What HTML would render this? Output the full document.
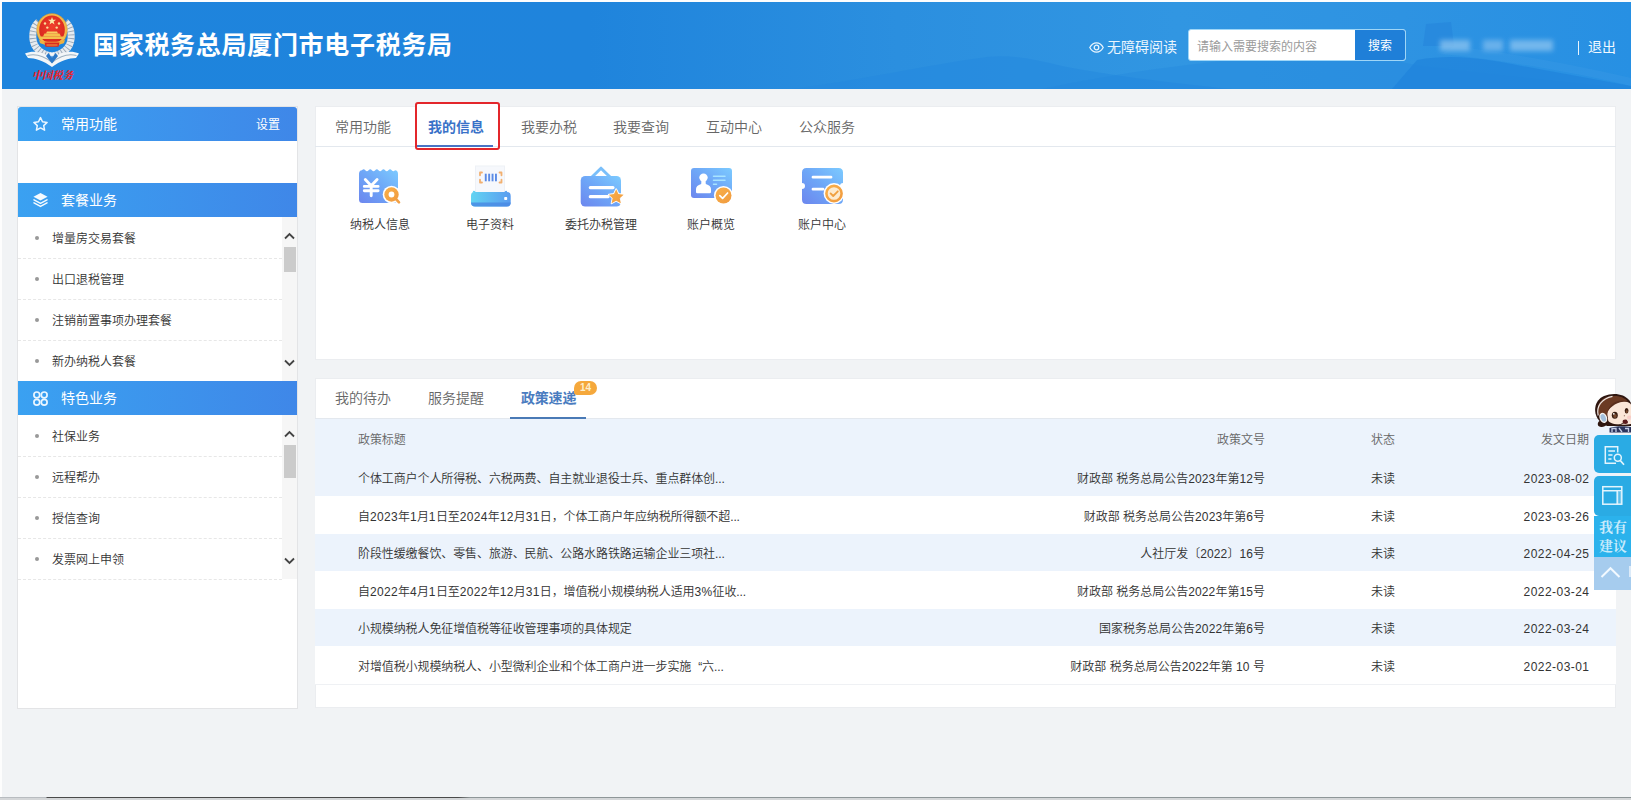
<!DOCTYPE html>
<html lang="zh-CN">
<head>
<meta charset="utf-8">
<title>国家税务总局厦门市电子税务局</title>
<style>
*{box-sizing:border-box;margin:0;padding:0}
html,body{width:1631px;height:800px;overflow:hidden}
body{background:#fdfdfd;font-family:"Liberation Sans","Noto Sans CJK SC",sans-serif;color:#333;position:relative;font-weight:350}
.abs{position:absolute}
#page{position:absolute;left:2px;top:2px;width:1629px;height:796px;background:#f1f3f5;overflow:hidden}
#hdr{font-weight:400;position:absolute;left:0;top:0;width:1629px;height:87px;background:linear-gradient(90deg,#1e84dc 0%,#1f84dc 40%,#2f92e0 75%,#2286dc 100%);overflow:hidden}
#hdr .title{position:absolute;left:91px;top:25px;font-size:25px;font-weight:700;color:#fff;letter-spacing:0.7px;line-height:36px;white-space:nowrap}
/* sidebar */
#side{position:absolute;left:16px;top:105px;width:279px;height:601px;background:#fff;box-shadow:0 0 0 1px #e3e4e6}
.shead{font-weight:400;position:absolute;left:0;width:279px;height:34px;background:linear-gradient(90deg,#3aa1f1,#3f87e8);color:#fff;font-size:14px;line-height:34px}
.shead span.t{position:absolute;left:43px;top:0}
.shead span.set{position:absolute;right:17px;top:1px;font-size:12px}
.sitem{position:absolute;left:0;width:264px;height:41px;border-bottom:1px dashed #e7e7e7;font-size:12px;line-height:40px;color:#333}
.sitem i{position:absolute;left:17px;top:18px;width:4px;height:4px;border-radius:50%;background:#999}
.sitem span{position:absolute;left:34px;top:1px;white-space:nowrap}
.sbar{position:absolute;left:264px;width:15px;background:#f6f6f6}
.sbar .th{position:absolute;left:2px;width:12px;background:#cbcbcb}
/* panels */
.panel{position:absolute;left:313px;width:1301px;background:#fff;outline:1px solid #ebedf0;outline-offset:-1px}
.tabs{position:absolute;left:0;top:0;width:100%;height:40px;border-bottom:1px solid #e3e8ee}
.tab{position:absolute;top:0;font-size:14px;line-height:40px;color:#666;white-space:nowrap}
.tab.on{color:#3a72c8;font-weight:700}
.ico{position:absolute;top:56px;width:48px;height:48px}
.ilab{position:absolute;top:109px;width:120px;text-align:center;font-size:12px;line-height:18px;color:#333;white-space:nowrap}
.row{position:absolute;left:0;width:1301px;font-size:12px;color:#333;white-space:nowrap}
.row span{position:absolute;top:2px}
.row.h span{top:1px}
.row .c4.d{letter-spacing:.45px;right:26.500px}
.row .c1{left:43px;letter-spacing:-.1px}
.row b{font-weight:inherit;letter-spacing:.35px}
.row .c2 b{letter-spacing:.1px}
.row .c2{right:351px}
.row .c3{left:1056px}
.row .c4{right:27px}
.badge{left:259px;top:3px;width:23px;height:14px;border-radius:7px 7px 7px 3px;background:#f5a83c;color:#fdeecb;font-size:10px;font-weight:700;line-height:14px;text-align:center}
</style>
</head>
<body>
<div id="page">
  <div id="hdr">
    <svg class="abs" style="left:0;top:0" width="1629" height="87" viewBox="0 0 1629 87">
      <defs>
        <linearGradient id="hg" x1="0" y1="0" x2="1" y2="0">
          <stop offset="0" stop-color="#1e84dd"/><stop offset="0.36" stop-color="#1f84dc"/>
          <stop offset="0.55" stop-color="#2b8fdf"/><stop offset="0.72" stop-color="#3196e2"/>
          <stop offset="0.86" stop-color="#2e93e2"/><stop offset="1" stop-color="#2790e3"/>
        </linearGradient>
      </defs>
      <rect width="1629" height="87" fill="url(#hg)"/>
      <path d="M790 87 C860 78 930 62 985 55 C1010 52 1035 58 1060 64 C1100 72 1160 80 1230 87 Z" fill="#2489de" opacity=".55"/>
      <path d="M1040 87 C1120 70 1200 60 1290 52 C1340 48 1380 56 1420 64 L1629 87 Z" fill="#2388de" opacity=".35"/>
      <path d="M1421 44 L1424 22 L1449 20 L1452 44 Z" fill="#2483da" opacity=".55"/>
      <path d="M1390 87 L1415 58 C1450 52 1480 56 1520 64 L1629 84 L1629 87 Z" fill="#1f83db" opacity=".7"/>
      <path d="M1452 44 C1500 50 1570 62 1629 76 L1629 84 C1570 70 1500 58 1440 52 Z" fill="#3b9be5" opacity=".35"/>
    </svg>
    <svg class="abs" style="left:18px;top:8px" width="66" height="76" viewBox="20 10 66 76">
      <defs>
        <radialGradient id="lr" cx=".5" cy=".4" r=".6"><stop offset="0" stop-color="#f0402c"/><stop offset="1" stop-color="#d8261e"/></radialGradient>
      </defs>
      <!-- wreath -->
      <g fill="none" stroke="#e6ebf0" stroke-width="7" stroke-linecap="butt">
        <path d="M38.500 22 C31.500 28 31 41 36.500 48 C40 52.500 45.500 55 51 56"/>
        <path d="M65.500 22 C72.500 28 73 41 67.500 48 C64 52.500 58.500 55 53 56"/>
      </g>
      <g fill="none" stroke="#7d8fa3" stroke-width="7" stroke-dasharray=".9 2.600" opacity=".75">
        <path d="M38.500 22 C31.500 28 31 41 36.500 48 C40 52.500 45.500 55 51 56"/>
        <path d="M65.500 22 C72.500 28 73 41 67.500 48 C64 52.500 58.500 55 53 56"/>
      </g>
      <!-- ribbon / book -->
      <path d="M25 53.500 C33 50 42 51.500 52 58 C62 51.500 71 50 79 53.500 L76 58 C69 58 60 61 52 67 C44 61 35 58 28 58 Z" fill="#f3f6f8"/>
      <path d="M27.500 55.500 C35 53.500 44 56 52 62.500 C60 56 69 53.500 76.500 55.500" fill="none" stroke="#9db0c0" stroke-width="1.100"/>
      <path d="M46 56 L52 63.500 L58 56 L55.500 53 L52 58 L48.500 53 Z" fill="#2a78c8"/>
      <path d="M49 52.500 L52 57 L55 52.500 Z" fill="#f3f6f8"/>
      <!-- emblem -->
      <ellipse cx="52" cy="30" rx="15.300" ry="16.600" fill="#f2b84a"/>
      <ellipse cx="52" cy="30" rx="15.300" ry="16.600" fill="none" stroke="#c88a2a" stroke-width=".6" opacity=".6"/>
      <ellipse cx="52" cy="29.700" rx="12.800" ry="14.100" fill="url(#lr)"/>
      <path d="M40.500 36.500 L63.500 36.500 L64.500 39 L39.500 39 Z" fill="#f4c04e"/>
      <path d="M43 36.500 L44.500 33.500 L59.500 33.500 L61 36.500 Z" fill="#f4c04e"/>
      <path d="M46 33.500 L47 31.600 L57 31.600 L58 33.500 Z" fill="#f6cc60"/>
      <path d="M39 39.800 C43 42.500 61 42.500 65 39.800 L64 43 C60 45.500 44 45.500 40 43 Z" fill="#f0b040"/>
      <path d="M44.500 42.500 L59.500 42.500 L58.500 46.800 L45.500 46.800 Z" fill="#d92a20"/><path d="M46.500 45 L57.500 45" stroke="#f4c04e" stroke-width=".8"/>
      <path d="M52 17 L53 19.800 L56 19.800 L53.600 21.600 L54.500 24.500 L52 22.700 L49.500 24.500 L50.400 21.600 L48 19.800 L51 19.800 Z" fill="#fbe9a8"/>
      <g fill="#fbe09a"><circle cx="45" cy="23.500" r="1.200"/><circle cx="59" cy="23.500" r="1.200"/><circle cx="47.300" cy="27.600" r="1.200"/><circle cx="56.700" cy="27.600" r="1.200"/></g>
      <text x="52.500" y="79" text-anchor="middle" font-family="'Liberation Serif','Noto Serif CJK SC',serif" font-weight="900" font-style="italic" font-size="10.500" fill="#e8222c" textLength="41" lengthAdjust="spacingAndGlyphs">中国税务</text>
    </svg>
    <div class="title">国家税务总局厦门市电子税务局</div>
    <svg class="abs" style="left:1087px;top:40px" width="15" height="11" viewBox="0 0 15 11"><path d="M0.8 5.5 C3 1.5 5.2 0.8 7.5 0.8 C9.8 0.8 12 1.5 14.2 5.5 C12 9.5 9.8 10.2 7.5 10.2 C5.2 10.2 3 9.5 0.8 5.5Z" fill="none" stroke="#e8f4fd" stroke-width="1.3"/><circle cx="7.5" cy="5.5" r="2.3" fill="none" stroke="#e8f4fd" stroke-width="1.3"/></svg>
    <div class="abs" style="left:1105px;top:35px;font-size:14px;line-height:20px;color:#eaf5fe;white-space:nowrap">无障碍阅读</div>
    <div class="abs" style="left:1186px;top:27px;width:218px;height:32px;border:1px solid #9fd6f7;border-radius:3px;background:#fff;overflow:hidden">
      <div class="abs" style="left:8px;top:2px;font-size:12px;line-height:30px;color:#9a9a9a;white-space:nowrap">请输入需要搜索的内容</div>
      <div class="abs" style="left:166px;top:0;width:50px;height:30px;background:#1f7fd8;color:#fff;font-size:12px;line-height:33px;text-align:center">搜索</div>
    </div>
    <div class="abs" style="left:1438px;top:38px;width:30px;height:11px;background:#8cc4f0;filter:blur(2.5px);opacity:.75"></div>
    <div class="abs" style="left:1481px;top:38px;width:20px;height:11px;background:#7dbbee;filter:blur(2.5px);opacity:.75"></div>
    <div class="abs" style="left:1508px;top:38px;width:43px;height:11px;background:#8cc4f0;filter:blur(2.5px);opacity:.75"></div>
    <div class="abs" style="left:1575.500px;top:39px;width:1.500px;height:14px;background:#e8f4fd"></div>
    <div class="abs" style="left:1586px;top:35px;font-size:14px;line-height:20px;color:#f2f9ff;white-space:nowrap">退出</div>
  </div>
  <div id="side">
    <div class="shead" style="top:0;border-radius:3px 3px 0 0"><svg class="abs" style="left:14px;top:9px" width="17" height="16" viewBox="0 0 17 16"><path d="M8.5 1.6 L10.5 5.8 L15.1 6.4 L11.7 9.6 L12.6 14.2 L8.5 11.9 L4.4 14.2 L5.3 9.6 L1.9 6.4 L6.5 5.8 Z" fill="none" stroke="#eaf6ff" stroke-width="1.5" stroke-linejoin="round"/></svg><span class="t">常用功能</span><span class="set">设置</span></div>
    <div class="shead" style="top:76px"><svg class="abs" style="left:14px;top:9px" width="17" height="16" viewBox="0 0 17 16"><path d="M8.5 1 L15.5 4.8 L8.5 8.6 L1.5 4.8 Z" fill="#f4faff"/><path d="M2 7.9 L8.5 11.4 L15 7.9 M2 10.9 L8.5 14.4 L15 10.9" fill="none" stroke="#f4faff" stroke-width="1.5" stroke-linejoin="round" stroke-linecap="round"/></svg><span class="t">套餐业务</span></div>
    <div class="sitem" style="top:111px"><i></i><span>增量房交易套餐</span></div>
    <div class="sitem" style="top:152px"><i></i><span>出口退税管理</span></div>
    <div class="sitem" style="top:193px"><i></i><span>注销前置事项办理套餐</span></div>
    <div class="sitem" style="top:234px"><i></i><span>新办纳税人套餐</span></div>
    <div class="sbar" style="top:110px;height:164px"><svg class="abs" style="left:2px;top:15px" width="11" height="8" viewBox="0 0 11 8"><path d="M1 6.5 L5.5 2 L10 6.5" fill="none" stroke="#444" stroke-width="1.8"/></svg><svg class="abs" style="left:2px;bottom:14px" width="11" height="8" viewBox="0 0 11 8"><path d="M1 1.5 L5.5 6 L10 1.5" fill="none" stroke="#444" stroke-width="1.8"/></svg><div class="th" style="top:30px;height:25px"></div></div>
    <div class="shead" style="top:274px"><svg class="abs" style="left:14px;top:9px" width="17" height="17" viewBox="0 0 17 17"><g fill="none" stroke="#eaf6ff" stroke-width="1.700"><circle cx="4.8" cy="4.9" r="2.9"/><circle cx="12.2" cy="4.9" r="2.9"/><circle cx="4.8" cy="12.3" r="2.9"/><circle cx="12.2" cy="12.3" r="2.9"/></g></svg><span class="t">特色业务</span></div>
    <div class="sitem" style="top:309px"><i></i><span>社保业务</span></div>
    <div class="sitem" style="top:350px"><i></i><span>远程帮办</span></div>
    <div class="sitem" style="top:391px"><i></i><span>授信查询</span></div>
    <div class="sitem" style="top:432px"><i></i><span>发票网上申领</span></div>
    <div class="sbar" style="top:308px;height:164px"><svg class="abs" style="left:2px;top:15px" width="11" height="8" viewBox="0 0 11 8"><path d="M1 6.5 L5.5 2 L10 6.5" fill="none" stroke="#444" stroke-width="1.8"/></svg><svg class="abs" style="left:2px;bottom:14px" width="11" height="8" viewBox="0 0 11 8"><path d="M1 1.5 L5.5 6 L10 1.5" fill="none" stroke="#444" stroke-width="1.8"/></svg><div class="th" style="top:30px;height:33px"></div></div>
  </div>
  <div class="panel" id="p1" style="top:104px;height:254px;border-top:1px solid #fff">
    <div class="tabs">
      <span class="tab" style="left:20px">常用功能</span>
      <span class="tab on" style="left:113px">我的信息</span>
      <span class="tab" style="left:206px">我要办税</span>
      <span class="tab" style="left:298px">我要查询</span>
      <span class="tab" style="left:391px">互动中心</span>
      <span class="tab" style="left:484px">公众服务</span>
      <div class="abs" style="left:102px;top:38px;width:76px;height:2px;background:#4a74c4"></div>
      <div class="abs" style="left:102px;top:-3px;width:81px;height:4px;background:#fff"></div>
      <div class="abs" style="left:100px;top:-5px;width:85px;height:48px;border:2px solid #e3262b;border-radius:3px;z-index:5"></div>
    </div>
<svg class="abs" style="left:25px;top:53px" width="530" height="54" viewBox="340 160 530 54">
      <defs>
        <linearGradient id="gb" x1="1" y1="0" x2="0" y2="1"><stop offset="0" stop-color="#7ccbff"/><stop offset="0.5" stop-color="#6ea6f7"/><stop offset="1" stop-color="#6c86ee"/></linearGradient>
        <linearGradient id="gp" x1="0" y1="0" x2="1" y2="0"><stop offset="0" stop-color="#62d4f2"/><stop offset="1" stop-color="#5a9cf0"/></linearGradient>
        <linearGradient id="go" x1="0" y1="0" x2="1" y2="1"><stop offset="0" stop-color="#f9b04a"/><stop offset="1" stop-color="#f09a3e"/></linearGradient>
      </defs>
      <!-- 1 taxpayer info -->
      <path d="M359 174 Q359 170.200 362 170.200 Q363.65 168.20 365.30 170.20 Q366.95 172.20 368.60 170.20 Q370.25 168.20 371.90 170.20 Q373.55 172.20 375.20 170.20 Q376.85 168.20 378.50 170.20 Q380.15 172.20 381.80 170.20 Q383.45 168.20 385.10 170.20 Q386.75 172.20 388.40 170.20 Q390.05 168.20 391.70 170.20 Q393.35 172.20 395.00 170.20 Q398 170.200 398 174 L398 199.500 Q398 203 394.500 203 L362.500 203 Q359 203 359 199.500 Z" fill="url(#gb)"/>
      <path d="M365.300 179.600 L371.200 185.800 L377.100 179.600 M364.300 186.400 L378.100 186.400 M364.300 190.700 L378.100 190.700 M371.200 185.800 L371.200 195.800" fill="none" stroke="#fff" stroke-width="2.900" stroke-linecap="round" stroke-linejoin="round"/>
      <path d="M395 198 L399 202.5" stroke="#fff" stroke-width="5" stroke-linecap="round"/>
      <circle cx="391.5" cy="194.5" r="8.8" fill="#fff"/>
      <path d="M395.5 198.5 L399 202.3" stroke="#f2a046" stroke-width="2.6" stroke-linecap="round"/>
      <circle cx="391.5" cy="194.500" r="7.200" fill="url(#go)"/>
      <circle cx="391.500" cy="194.500" r="2.900" fill="#fff"/>
      <!-- 2 e-docs -->
      <rect x="475.500" y="166" width="29" height="27" fill="#f6f8fc" stroke="#eef1f6" stroke-width="1"/>
      <g fill="#5b8be6"><rect x="484.800" y="173.700" width="1.900" height="7.600"/><rect x="488.200" y="173.700" width="1.900" height="7.600"/><rect x="491.600" y="173.700" width="1.900" height="7.600"/><rect x="495" y="173.700" width="1.900" height="7.600"/></g>
      <path d="M482 172.500 L480 172.500 L480 175.300 M480 179.700 L480 182.500 L482 182.500 M499.500 172.500 L501.500 172.500 L501.500 175.300 M501.500 179.700 L501.500 182.500 L499.500 182.500" fill="none" stroke="#f2b070" stroke-width="1.800" stroke-linejoin="round" stroke-linecap="round"/>
      <path d="M471 196 Q471 192 474 192 L472.800 192 Q473.500 189.300 475.600 192 L504.400 192 Q506.500 189.300 507.200 192 L507 192 Q510.700 192 510.700 196 L510.700 202.500 Q510.700 206.500 506.700 206.500 L475 206.500 Q471 206.500 471 202.500 Z" fill="url(#gp)"/>
      <path d="M471 202.500 L510.700 202.500 Q510.700 206.500 506.700 206.500 L475 206.500 Q471 206.500 471 202.500 Z" fill="#4a8be4" opacity=".85"/>
      <rect x="504.200" y="197" width="3" height="3" rx=".8" fill="#fff"/>
      <!-- 3 delegate -->
      <path d="M592 177 L601 168.200 L610 177" fill="none" stroke="#7abffa" stroke-width="3" stroke-linejoin="round" stroke-linecap="round"/>
      <rect x="580.700" y="176" width="40.300" height="30.500" rx="4.500" fill="url(#gb)"/>
      <path d="M590.300 187.600 L613 187.600 M590.300 196.700 L608 196.700" stroke="#fff" stroke-width="3.200" stroke-linecap="round"/>
      <path d="M616.200 189.300 L618.400 194 L623.600 194.700 L619.800 198.200 L620.800 203.300 L616.200 200.800 L611.600 203.300 L612.600 198.200 L608.800 194.700 L614 194 Z" fill="url(#go)" stroke="#fff" stroke-width="1.800" stroke-linejoin="round" paint-order="stroke"/>
      <!-- 4 account overview -->
      <rect x="691" y="168" width="41" height="30" rx="3" fill="url(#gb)"/>
      <circle cx="703.5" cy="177.6" r="4.2" fill="#fff"/>
      <path d="M701.5 180 L705.5 180 L705.8 184 Q711 185.5 711 189 L711 192 Q711 193.3 709.7 193.3 L697.3 193.3 Q696 193.3 696 192 L696 189 Q696 185.5 701.2 184 Z" fill="#fff"/>
      <path d="M713.5 176.3 L725 176.3 M713.5 180.3 L725 180.3 M713.5 184.3 L716.5 184.3" stroke="#a8e4ff" stroke-width="1.5" stroke-linecap="round"/>
      <circle cx="723.5" cy="195.5" r="9.6" fill="#fff"/>
      <circle cx="723.5" cy="195.5" r="8" fill="url(#go)"/>
      <path d="M719.8 195.6 L722.6 198.4 L727.6 193" fill="none" stroke="#fff" stroke-width="1.7" stroke-linecap="round" stroke-linejoin="round"/>
      <!-- 5 account center -->
      <path d="M806.5 168 L838.5 168 Q843 168 843 172.5 L843 183 A3 3 0 0 0 843 189 L843 199.500 Q843 204 838.5 204 L806.500 204 Q802 204 802 199.500 L802 189 A3 3 0 0 0 802 183 L802 172.500 Q802 168 806.500 168 Z" fill="url(#gb)"/>
      <path d="M813 177.2 L831 177.2 M813 189.200 L823 189.200" stroke="#fff" stroke-width="2.8" stroke-linecap="round"/>
      <circle cx="834" cy="193.5" r="10.4" fill="#fff"/>
      <circle cx="834" cy="193.5" r="7.6" fill="#fdebcf" stroke="url(#go)" stroke-width="2.6"/>
      <path d="M830.6 193.4 L833.2 196 L837.800 191.300" fill="none" stroke="#f0a040" stroke-width="1.800" stroke-linecap="round" stroke-linejoin="round"/>
    </svg>
    <div class="ilab" style="left:5px">纳税人信息</div>
    <div class="ilab" style="left:115px">电子资料</div>
    <div class="ilab" style="left:226px">委托办税管理</div>
    <div class="ilab" style="left:336px">账户概览</div>
    <div class="ilab" style="left:447px">账户中心</div>
  </div>
  <div class="panel" id="p2" style="top:376px;height:330px">
    <div class="tabs" style="height:41px">
      <span class="tab" style="left:20px">我的待办</span>
      <span class="tab" style="left:113px">服务提醒</span>
      <span class="tab on" style="left:206px;color:#4a7cc0;letter-spacing:-.2px">政策速递</span>
      <div class="abs" style="left:195px;top:39px;width:76px;height:2px;background:#4a7ab6"></div>
      <div class="abs badge">14</div>
    </div>
    <div class="row h" style="top:41px;height:40px;line-height:40px;background:#ecf3fc;color:#666"><span class="c1">政策标题</span><span class="c2">政策文号</span><span class="c3">状态</span><span class="c4">发文日期</span></div>
    <div class="row" style="top:81px;height:37px;line-height:37px;background:#ecf3fc"><span class="c1">个体工商户个人所得税、六税两费、自主就业退役士兵、重点群体创...</span><span class="c2">财政部 税务总局公告<b>2023</b>年第<b>12</b>号</span><span class="c3">未读</span><span class="c4 d">2023-08-02</span></div>
    <div class="row" style="top:118px;height:38px;line-height:38px;background:#fff"><span class="c1">自<b>2023</b>年<b>1</b>月<b>1</b>日至<b>2024</b>年<b>12</b>月<b>31</b>日，个体工商户年应纳税所得额不超...</span><span class="c2">财政部 税务总局公告<b>2023</b>年第<b>6</b>号</span><span class="c3">未读</span><span class="c4 d">2023-03-26</span></div>
    <div class="row" style="top:156px;height:37px;line-height:37px;background:#ecf3fc"><span class="c1">阶段性缓缴餐饮、零售、旅游、民航、公路水路铁路运输企业三项社...</span><span class="c2">人社厅发〔<b>2022</b>〕<b>16</b>号</span><span class="c3">未读</span><span class="c4 d">2022-04-25</span></div>
    <div class="row" style="top:193px;height:38px;line-height:38px;background:#fff"><span class="c1">自<b>2022</b>年<b>4</b>月<b>1</b>日至<b>2022</b>年<b>12</b>月<b>31</b>日，增值税小规模纳税人适用<b>3%</b>征收...</span><span class="c2">财政部 税务总局公告<b>2022</b>年第<b>15</b>号</span><span class="c3">未读</span><span class="c4 d">2022-03-24</span></div>
    <div class="row" style="top:231px;height:37px;line-height:37px;background:#ecf3fc"><span class="c1">小规模纳税人免征增值税等征收管理事项的具体规定</span><span class="c2">国家税务总局公告<b>2022</b>年第<b>6</b>号</span><span class="c3">未读</span><span class="c4 d">2022-03-24</span></div>
    <div class="row" style="top:268px;height:38px;line-height:38px;background:#fff"><span class="c1">对增值税小规模纳税人、小型微利企业和个体工商户进一步实施<span style="position:static;padding-left:7px">“</span>六...</span><span class="c2">财政部 税务总局公告<b>2022</b>年第 <b>10</b> 号</span><span class="c3">未读</span><span class="c4 d">2022-03-01</span></div>
    <div class="abs" style="left:0;top:306px;width:1301px;height:1px;background:#eff1f4"></div>
  </div>
  <div class="abs" id="fw" style="left:1588px;top:388px;width:41px;height:200px">
    <svg class="abs" style="left:0;top:0" width="41" height="46" viewBox="1590 390 41 46">
      <path d="M1599.500 421 C1596.500 423 1597.500 427.500 1602 427 C1605 426.800 1607.500 425 1608 422 Z" fill="#2e1610"/>
      <path d="M1600 421.500 C1592.500 414 1593.500 400.500 1604 396 C1613 392.300 1624 393.500 1629.500 400.500 L1631 403 L1631 426 L1607 426 Z" fill="#2e1610"/>
      <path d="M1601.500 419 C1595.500 412.500 1596.500 402 1605 397.800 C1613 394.500 1623 395.500 1628 401.500 C1620 400 1611 404 1607.500 413 L1607 421 Z" fill="#6b3a23"/>
      <path d="M1598.200 415.500 C1596 406.500 1601.500 398.500 1612.500 396.300" fill="none" stroke="#efe6e2" stroke-width="1.200"/>
      <path d="M1607.300 414 C1608.500 406.500 1615 401.500 1624 401.300 C1627 401.500 1629.500 403 1631 404.500 L1631 424 C1624 425.600 1612 425 1608.300 421 Z" fill="#fbe6d8"/>
      <path d="M1607 412.500 C1611 405.500 1619 400.800 1628.500 401.600 C1621 398.500 1609.500 401.500 1607 412.500Z" fill="#5a2e1c"/>
      <ellipse cx="1629.500" cy="417.500" rx="2.600" ry="2" fill="#f8c8c4" opacity=".8"/>
      <ellipse cx="1614.800" cy="415.300" rx="3" ry="3.500" fill="#3a1e12"/>
      <ellipse cx="1615" cy="416" rx="1.700" ry="2" fill="#7a4a30"/>
      <circle cx="1613.800" cy="413.800" r=".9" fill="#fff"/>
      <ellipse cx="1626.600" cy="410.800" rx="1.900" ry="2.700" fill="#3a1e12"/>
      <ellipse cx="1626.800" cy="411.400" rx="1" ry="1.500" fill="#7a4a30"/>
      <circle cx="1624.300" cy="415.800" r=".5" fill="#5a2e1c"/>
      <ellipse cx="1603.300" cy="417.800" rx="3.100" ry="4.600" fill="#a3c0dc" stroke="#f4f2f0" stroke-width="1.300" transform="rotate(-22 1603.300 417.800)"/>
      <path d="M1606 422.500 C1612 427 1620 426 1624 422.500" fill="none" stroke="#2e1610" stroke-width="1"/>
      <ellipse cx="1625.300" cy="421.800" rx="2.700" ry="2.200" fill="#5a1a1c"/>
      <path d="M1627 421 L1631 418.500" stroke="#f0d8d8" stroke-width="1"/>
      <path d="M1609.500 432.500 L1609.500 428 C1615 426 1625 426 1631 427 L1631 432.500 Z" fill="#2c345c"/>
      <path d="M1612 432 L1612 428.500 L1616 428.500 L1616 432 M1619 428 L1622 432 M1625 428.500 L1628.500 428.500 L1628.500 432" stroke="#c4cce6" stroke-width="1.300" fill="none"/>
    </svg>
    <div class="abs" style="left:4px;top:45px;width:37px;height:38px;background:#2aabe4;border-radius:5px 0 0 5px"></div>
    <div class="abs" style="left:4px;top:86px;width:37px;height:40px;background:#2aabe4;border-radius:5px 0 0 5px"></div>
    <div class="abs" style="left:4px;top:126px;width:37px;height:41px;background:#2bb2ec"></div>
    <div class="abs" style="left:4px;top:167px;width:37px;height:33px;background:#a6ccee"></div>
    <div class="abs" style="left:39px;top:176px;width:2px;height:11px;background:#dcebf9"></div>
    <svg class="abs" style="left:4px;top:45px" width="37" height="155" viewBox="0 0 37 155">
      <g fill="none" stroke="#e4f5fd" stroke-width="1.500">
        <path d="M22 28.300 L11.300 28.300 L11.300 11.700 L23.700 11.700 L23.700 17.500"/>
        <path d="M14.300 16 L21 16 M14.300 20 L18.500 20 M14.300 24 L17.500 24" stroke-width="1.400"/>
        <circle cx="23.800" cy="22.800" r="3.500"/>
        <path d="M26.300 25.500 L30 29.800" stroke-width="1.700"/>
        <rect x="8.800" y="51.700" width="19" height="17.500"/>
        <path d="M8.800 55.800 L27.800 55.800 M23.200 55.800 L23.200 69.200" />
        <path d="M24.800 57 L24.800 69 M26.300 57 L26.300 69" stroke-width=".7" opacity=".8"/>
        <path d="M7.500 142 L16.500 133.200 L25.500 142" stroke-width="2" stroke="#f2f9ff"/>
      </g>
    </svg>
    <div class="abs" style="left:9px;top:129px;width:30px;font-family:'Liberation Serif','Noto Serif CJK SC',serif;font-weight:700;font-size:14px;line-height:18.500px;color:#c8ebfb;letter-spacing:0;white-space:nowrap">我有<br>建议</div>
  </div>
</div>
<div class="abs" style="left:0;top:797px;width:1631px;height:1px;background:linear-gradient(90deg,#b8bcc0 0,#b8bcc0 46px,#4a4a4a 47px,#4a4a4a 458px,#8e9698 470px,#8e9698 100%)"></div>
<div class="abs" style="left:0;top:798px;width:1631px;height:2px;background:#d4d6d8"></div>
</body>
</html>
